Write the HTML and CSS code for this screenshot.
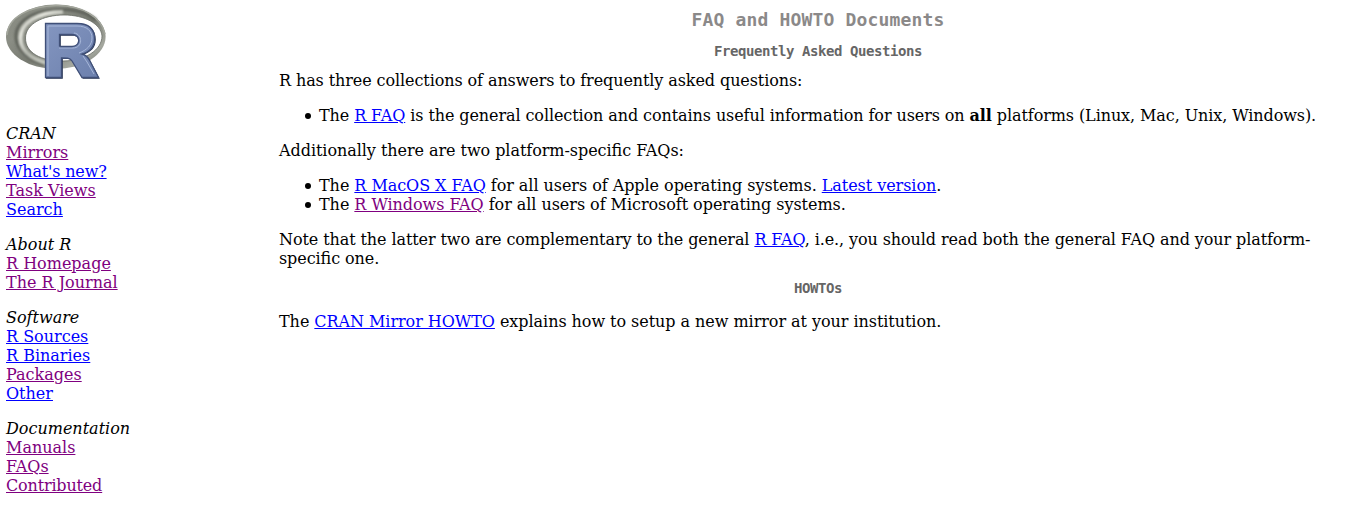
FILE: index.html
```html
<!DOCTYPE html>
<html lang="en">
<head>
<meta charset="utf-8">
<title>The Comprehensive R Archive Network</title>
<link rel="stylesheet" href="styles.css">
</head>
<body>
<div class="page">
<nav class="sidebar">
<svg class="logo" viewBox="0 0 100 78" role="img" aria-label="R">
<defs>
<linearGradient id="ring" x1="0" y1="0" x2="1" y2="1">
<stop offset="0" stop-color="#85887e"/><stop offset=".3" stop-color="#8b8e85"/><stop offset=".55" stop-color="#777a71"/><stop offset=".8" stop-color="#a5a89f"/><stop offset="1" stop-color="#656960"/>
</linearGradient>
<linearGradient id="shine" gradientUnits="userSpaceOnUse" x1="10" y1="10" x2="60" y2="65">
<stop offset="0" stop-color="#989b91"/><stop offset=".25" stop-color="#e5e6de"/><stop offset=".5" stop-color="#b5b8af"/><stop offset=".8" stop-color="#c8cbc2"/><stop offset="1" stop-color="#81857c"/>
</linearGradient>
<linearGradient id="face" x1="0" y1="0" x2="1" y2="1">
<stop offset="0" stop-color="#8496c0"/><stop offset="1" stop-color="#6c80ad"/>
</linearGradient>
<filter id="soft"><feGaussianBlur stdDeviation=".8"/></filter>
</defs>
<ellipse fill="url(#ring)" cx="49.8" cy="32.7" rx="49.8" ry="32.2"/>
<path class="ring-dark" filter="url(#soft)" d="M90 16C76 4 50 3 32 9 17 14 9 23 10 34 11 46 23 56 38 61"/>
<path class="shine" filter="url(#soft)" d="M57 8C31 8 14.5 19 14.5 34 14.5 49 31 59 50 60"/>
<path class="rim" d="M1 31C2 13 24 2 50 1.5S95 13 99 30"/>
<path class="hole" d="M19.5 34C19.5 20 37 11 58 11S95 20 96 32C96 46 79 57 57 57S19.5 49 19.5 34Z"/>
<g class="letter">
<path class="letter-shadow" fill-rule="evenodd" transform="translate(.8 .8)" d="M39 19H71C83 19 89 25 89 35 89 43 84 47 77 50 80 51 82 53 84 57L93 74H76L66 57C64 54 62 54 56 54V74H39ZM54 31V42H66C74 42 74 31 66 31Z"/>
<path fill="url(#face)" fill-rule="evenodd" d="M39 19H71C83 19 89 25 89 35 89 43 84 47 77 50 80 51 82 53 84 57L93 74H76L66 57C64 54 62 54 56 54V74H39ZM54 31V42H66C74 42 74 31 66 31Z"/>
<path class="edge" d="M39.5 74V19.5H71C83 19.5 88.5 25 88.5 35 88.5 43 83 48 76 50 80 51 82 53 84 57L92.5 73.5H76L66 57C64 54 62 54 55.5 54V73.5H39.5"/>
<path class="bevel" d="M42 72V22H71C81 22 86 27 86 34 86 41 81 46 73 49M53 44H67C77 44 77 30 68 29M77 52 81 58 88 70"/>
<path class="counter-edge" d="M53.5 42.5V30.5H66C75 30.5 75 42.5 66 42.5H53.5"/>
</g>
</svg>
<section><em>CRAN</em><a class="visited" href="#">Mirrors</a><a class="snug" href="#">What's new?</a><a class="visited" href="#">Task Views</a><a href="#">Search</a></section>
<section><em>About R</em><a class="visited" href="#">R Homepage</a><a class="visited" href="#">The R Journal</a></section>
<section><em>Software</em><a href="#">R Sources</a><a href="#">R Binaries</a><a class="visited" href="#">Packages</a><a href="#">Other</a></section>
<section><em>Documentation</em><a class="visited" href="#">Manuals</a><a class="visited" href="#">FAQs</a><a class="visited snug" href="#">Contributed</a></section>
</nav>
<main class="content">
<h1>FAQ and HOWTO Documents</h1>
<h3>Frequently Asked Questions</h3>
<p class="tight">R has three collections of answers to frequently asked questions:</p>
<ul><li class="tight">The <a href="#">R FAQ</a> is the general collection and contains useful information for users on <strong>all</strong> platforms (Linux, Mac, Unix, Windows).</li></ul>
<p>Additionally there are two platform-specific FAQs:</p>
<ul><li>The <a href="#">R MacOS X FAQ</a> for all users of Apple operating systems. <a href="#">Latest version</a>.</li><li>The <a class="visited" href="#">R Windows FAQ</a> for all users of Microsoft operating systems.</li></ul>
<p class="tight note">Note that the latter two are complementary to the general <a href="#">R FAQ</a>, i.e., you should read both the general FAQ and your platform-specific one.</p>
<h3 class="howtos">HOWTOs</h3>
<p>The <a href="#">CRAN Mirror HOWTO</a> explains how to setup a new mirror at your institution.</p>
</main>
</div>
</body>
</html>
```
FILE: styles.css
```css
body {
  margin: 0;
  background: white;
  color: black;
  font: 16px/19px "DejaVu Serif", serif;
}
.page { display: grid; grid-template-columns: 279px 1fr; }
a { color: #0000ff; text-decoration: underline; }
a.visited { color: #800080; }
.sidebar { padding: 4px 6px 0; }
.logo { display: block; width: 100px; height: 78px; margin-bottom: 42px; overflow: visible; }
.sidebar section { display: flex; flex-direction: column; align-items: flex-start; margin-bottom: 16px; }
.snug { letter-spacing: -.17px; }
.content { padding-top: 9px; letter-spacing: -.05px; font-feature-settings: "liga" 1; }
.content p { margin: 0 0 16px; }
.content ul { margin: 0 0 16px; padding-left: 40px; list-style: none; }
.content li::before {
  content: "";
  display: inline-block;
  width: 6px;
  height: 6px;
  margin: 0 8px 0 -14px;
  border-radius: 50%;
  background: black;
  vertical-align: 2px;
}
.content .tight { letter-spacing: -.09px; }
.content .note { margin-bottom: 12px; }
h1, h3 { margin: 0; text-align: center; font-family: "DejaVu Sans Mono", monospace; }
h1 { color: #8b8989; font-size: 18px; line-height: 21px; letter-spacing: .16px; margin-bottom: 13px; }
h3 { color: #666666; font-size: 14px; line-height: 16px; letter-spacing: -.43px; margin-bottom: 12px; }
.howtos { margin-bottom: 16px; }
.hole { fill: white; stroke: #686c64; stroke-width: .8; }
.ring-dark { fill: none; stroke: #60635c; stroke-width: 3; }
.shine { fill: none; stroke: url(#shine); stroke-width: 4; }
.rim { fill: none; stroke: #a3a69c; stroke-width: 1.5; }
.letter-shadow { fill: #26334f; }
.bevel { fill: none; stroke: #a7b7d9; stroke-width: 1; }
.edge, .counter-edge { fill: none; stroke: #405078; stroke-width: 1.3; }
```
